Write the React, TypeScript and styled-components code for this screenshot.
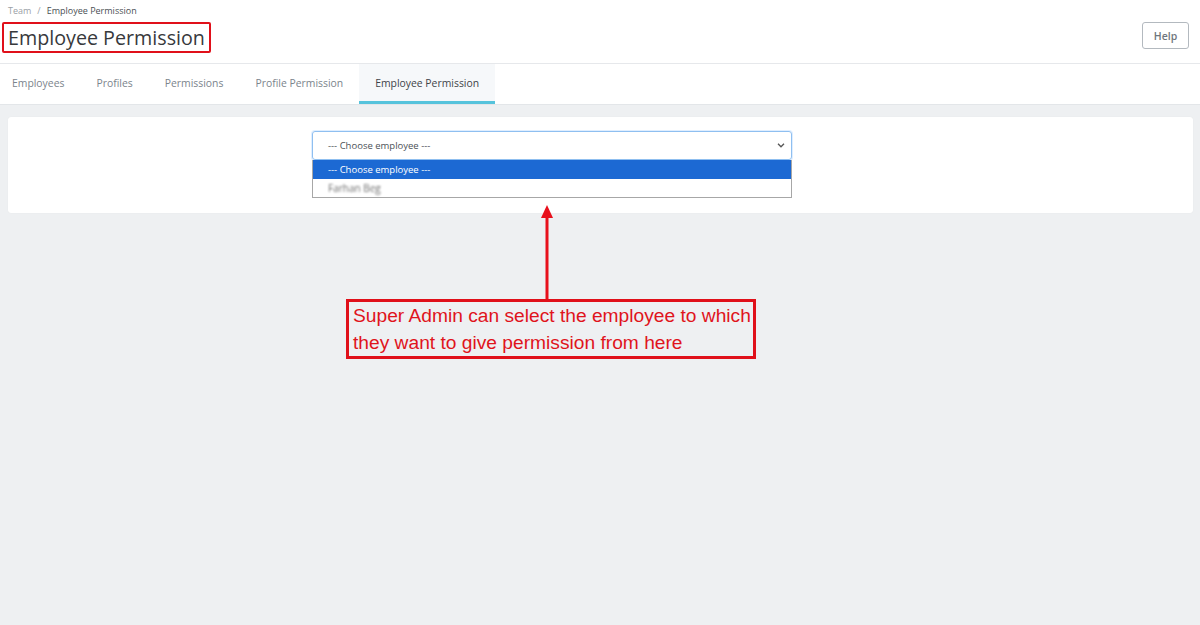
import styled, { createGlobalStyle } from "styled-components";

const GlobalStyle = createGlobalStyle`
  html, body {
    margin: 0;
    padding: 0;
    background: #eef0f2;
    font-family: "Open Sans", "Liberation Sans", sans-serif;
  }
  #root {
    min-height: 625px;
  }
`;

const Page = styled.div`
  position: relative;
  width: 1200px;
  min-height: 625px;
  background: #eef0f2;
`;

const Header = styled.header`
  display: flex;
  align-items: flex-start;
  justify-content: space-between;
  background: #ffffff;
  padding: 4px 11px 0 8px;
  height: 59px;
  border-bottom: 1px solid #e6e8eb;
`;

const TitleBlock = styled.div`
  display: flex;
  flex-direction: column;
`;

const Breadcrumb = styled.div`
  font-size: 9px;
  line-height: 13px;
  color: #9aa0a6;

  span.sep {
    margin: 0 6px;
  }

  span.current {
    color: #4a4f55;
  }
`;

const Title = styled.h1`
  margin: 5px 0 0 -6px;
  padding: 0 4px 0 4px;
  font-size: 19.7px;
  line-height: 27px;
  font-weight: 400;
  color: #37393c;
  border: 2px solid #e0101a;
  border-radius: 2px;
`;

const HelpButton = styled.button`
  margin-top: 18px;
  width: 47px;
  height: 27px;
  background: #ffffff;
  border: 1px solid #b3b9bf;
  border-radius: 3px;
  font-family: inherit;
  font-size: 10.5px;
  font-weight: 600;
  color: #6f767d;
`;

const Tabs = styled.nav`
  display: flex;
  background: #ffffff;
  height: 40px;
  border-bottom: 1px solid #e3e6e9;
`;

const Tab = styled.div<{ $active?: boolean }>`
  display: flex;
  align-items: center;
  padding: 1px 16px 0;
  font-size: 10.4px;
  color: ${(p) => (p.$active ? "#3e4449" : "#7b848c")};
  background: ${(p) => (p.$active ? "#f6f8fa" : "transparent")};
  border-bottom: 3px solid ${(p) => (p.$active ? "#56c3dc" : "transparent")};

  &:first-child {
    padding-left: 12px;
  }
`;

const Content = styled.main`
  padding: 12px 7px 0 8px;
`;

const Card = styled.section`
  background: #ffffff;
  border-radius: 3px;
  height: 96px;
  box-shadow: 0 0 1px rgba(0, 0, 0, 0.08);
  display: grid;
  grid-template-columns: 304px 480px 1fr;
  align-content: start;
  padding-top: 14px;
  box-sizing: border-box;
`;

const SelectWrap = styled.div`
  grid-column: 2;
  position: relative;
`;

const SelectBox = styled.div`
  height: 29px;
  box-sizing: border-box;
  border: 1px solid #8fbff0;
  border-radius: 3px;
  box-shadow: 0 0 0 1px rgba(128, 189, 255, 0.25);
  display: flex;
  align-items: center;
  justify-content: space-between;
  padding: 0 6px 0 15px;
  font-size: 9.5px;
  color: #4b5157;
`;

const DropList = styled.ul`
  position: absolute;
  top: 29px;
  left: 0;
  right: 0;
  margin: 0;
  padding: 0;
  list-style: none;
  background: #ffffff;
  border: 1px solid #a7a7a7;
  border-top: none;
`;

const DropOption = styled.li<{ $selected?: boolean }>`
  height: 18.5px;
  display: flex;
  align-items: center;
  padding-left: 15px;
  font-size: 9.5px;
  color: ${(p) => (p.$selected ? "#ffffff" : "#7a7a7a")};
  background: ${(p) => (p.$selected ? "#1c69d3" : "#ffffff")};
`;

const Blurred = styled.span`
  filter: blur(1px);
  font-size: 10px;
  color: #6e6e6e;
`;

const Annotation = styled.div`
  position: absolute;
  left: 346px;
  top: 205px;
  width: 410px;
  display: flex;
  flex-direction: column;
  align-items: center;
`;

const Arrow = styled.svg`
  display: block;
  margin-left: -9px;
`;

const NoteBox = styled.div`
  box-sizing: border-box;
  width: 410px;
  height: 60px;
  border: 3px solid #e0101a;
  padding: 0 0 0 4px;
  font-family: "Liberation Sans", Arial, sans-serif;
  font-size: 19.2px;
  line-height: 27px;
  color: #e0141c;
  background: #eef0f2;
  white-space: nowrap;
`;

export default function App() {
  return (
    <Page>
      <GlobalStyle />
      <Header>
        <TitleBlock>
          <Breadcrumb>
            Team<span className="sep">/</span>
            <span className="current">Employee Permission</span>
          </Breadcrumb>
          <Title>Employee Permission</Title>
        </TitleBlock>
        <HelpButton>Help</HelpButton>
      </Header>

      <Tabs>
        <Tab>Employees</Tab>
        <Tab>Profiles</Tab>
        <Tab>Permissions</Tab>
        <Tab>Profile Permission</Tab>
        <Tab $active>Employee Permission</Tab>
      </Tabs>

      <Content>
        <Card>
          <SelectWrap>
            <SelectBox>
              <span>--- Choose employee ---</span>
              <svg width="8" height="5" viewBox="0 0 8 5">
                <path d="M1 0.8 L4 3.8 L7 0.8" fill="none" stroke="#555" strokeWidth="1.3" />
              </svg>
            </SelectBox>
            <DropList>
              <DropOption $selected>--- Choose employee ---</DropOption>
              <DropOption>
                <Blurred>Farhan Beg</Blurred>
              </DropOption>
            </DropList>
          </SelectWrap>
        </Card>
      </Content>

      <Annotation>
        <Arrow width="14" height="94" viewBox="0 0 14 94">
          <polygon points="7,0 13,13 1,13" fill="#e8101c" />
          <rect x="5.5" y="12" width="3" height="82" fill="#e8101c" />
        </Arrow>
        <NoteBox>
          Super Admin can select the employee to which
          <br />
          they want to give permission from here
        </NoteBox>
      </Annotation>
    </Page>
  );
}
